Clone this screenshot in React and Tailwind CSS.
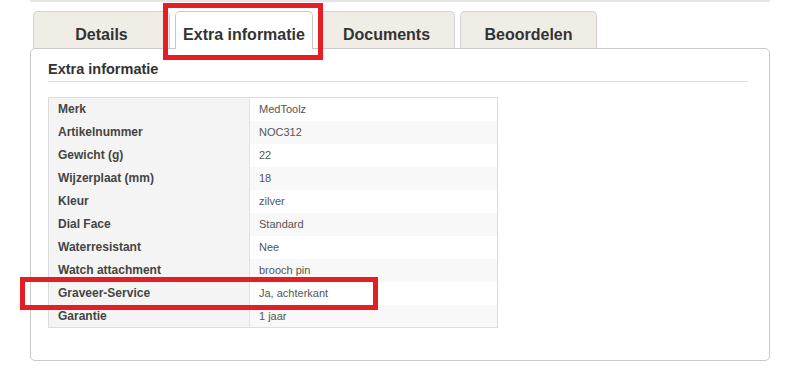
import React from "react";

const TABS = ["Details", "Extra informatie", "Documents", "Beoordelen"];

const ROWS = [
  ["Merk", "MedToolz"],
  ["Artikelnummer", "NOC312"],
  ["Gewicht (g)", "22"],
  ["Wijzerplaat (mm)", "18"],
  ["Kleur", "zilver"],
  ["Dial Face", "Standard"],
  ["Waterresistant", "Nee"],
  ["Watch attachment", "brooch pin"],
  ["Graveer-Service", "Ja, achterkant"],
  ["Garantie", "1 jaar"],
];

export default function App() {
  const active = 1;
  return (
    <div className="relative w-[803px] h-[371px] bg-white font-['Liberation_Sans',Arial,sans-serif] overflow-hidden">
      <div className="ml-[30px] w-[740px] h-[2px] bg-[#e6e6e6]" />

      <div className="ml-[30px] mt-[9px] w-[740px]">
        <div className="relative z-10 flex items-start gap-[5px] pl-[3px] h-[37px]">
          {TABS.map((t, i) => (
            <div
              key={t}
              className={
                i === active
                  ? "w-[138px] h-[38px] rounded-t-[5px] border border-b-0 border-[#c8c8c8] bg-white text-center text-[16px] font-bold text-[#333] leading-[18px] pt-[14px]"
                  : "w-[137px] h-[37px] rounded-t-[5px] border border-b-0 border-[#d2d2d2] bg-[#f0ede6] text-center text-[16px] font-bold text-[#333] leading-[18px] pt-[14px]"
              }
            >
              {t}
            </div>
          ))}
        </div>

        <div className="h-[313px] rounded-[5px] border border-[#c9c9c9] pt-[12px] pl-[17px] pr-[21px]">
          <div className="text-[14.5px] font-bold text-[#333] leading-[17px] pb-[3px] border-b border-[#dcdcdc]">
            Extra informatie
          </div>
          <table className="mt-[15px] w-[450px] border-collapse border border-[#dcdcdc]">
            <tbody>
              {ROWS.map(([k, v], i) => (
                <tr key={k} className="h-[23px]">
                  <td className="w-[201px] bg-[#f4f4f4] border-r border-[#e2e2e2] pl-[9px] text-[12px] font-bold text-[#444] leading-[14px]">
                    {k}
                  </td>
                  <td
                    className={
                      i % 2 === 1
                        ? "bg-[#f8f8f8] pl-[9px] text-[11px] text-[#555] leading-[14px]"
                        : "bg-white pl-[9px] text-[11px] text-[#555] leading-[14px]"
                    }
                  >
                    {v}
                  </td>
                </tr>
              ))}
            </tbody>
          </table>
        </div>
      </div>

      <div className="absolute left-[163px] top-[3px] w-[160px] h-[57px] border-[5px] border-[#e31e25] z-20" />
      <div className="absolute left-[20px] top-[277px] w-[358px] h-[33px] border-[5px] border-[#e31e25] z-20" />
    </div>
  );
}
